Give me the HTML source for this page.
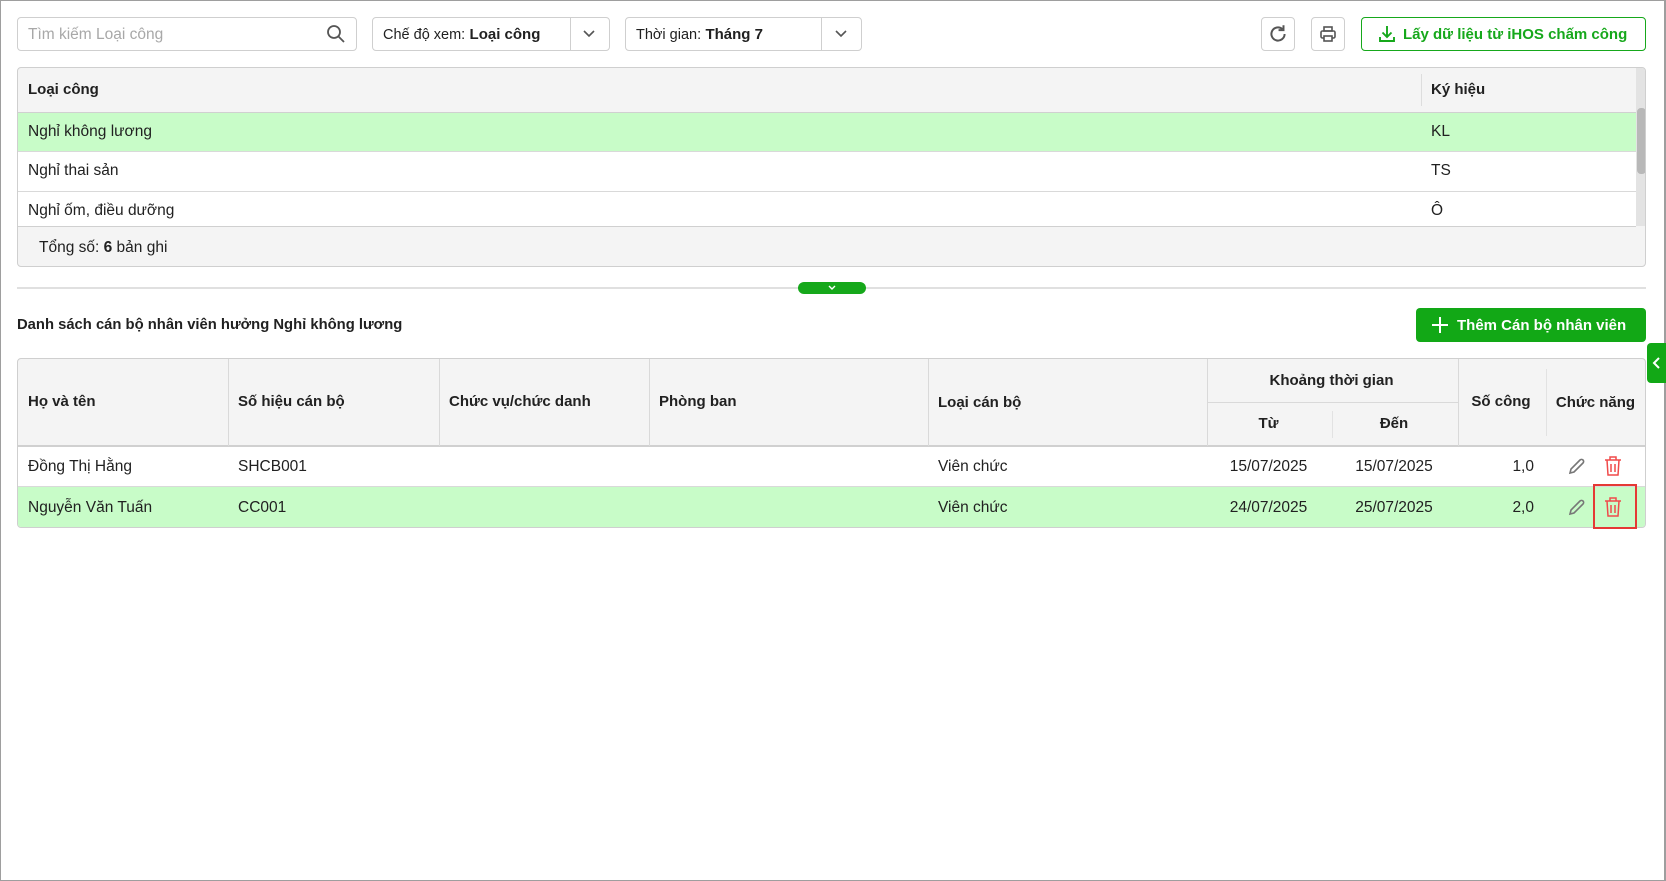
<!DOCTYPE html>
<html><head><meta charset="utf-8"><style>
*{box-sizing:border-box;margin:0;padding:0}
body{width:1666px;height:881px;background:#fff;font-family:"Liberation Sans",sans-serif;font-size:15.5px;color:#212121;position:relative;overflow:hidden}
.frame{position:absolute;left:0;top:0;width:1666px;height:881px;border:1px solid #9e9e9e;border-right:2px solid #9e9e9e}
.a{position:absolute}
.box{position:absolute;border:1px solid #cfcfcf;border-radius:4px;background:#fff}
.t{position:absolute;white-space:nowrap}
.b{font-weight:bold;font-size:15px}
.hl{background:#c8fcc8}
.ln{position:absolute;background:#d9d9d9}
</style></head><body>
<div class="frame"></div>

<div class="box" style="left:17px;top:17px;width:340px;height:34px"></div>
<div class="t" style="left:28px;top:26px;color:#a8a8a8">Tìm kiếm Loại công</div>
<svg class="a" style="left:326px;top:24px" width="20" height="20" viewBox="0 0 20 20"><circle cx="8" cy="8" r="6" fill="none" stroke="#555" stroke-width="1.8"/><path d="M12.5 12.5L18 18" stroke="#555" stroke-width="1.8"/></svg>

<div class="box" style="left:372px;top:17px;width:238px;height:34px"></div>
<div class="ln" style="left:570px;top:18px;width:1px;height:32px;background:#cfcfcf"></div>
<div class="t" style="left:383px;top:26px"><span style="font-size:14.5px">Chế độ xem:</span> <span style="font-weight:bold;font-size:15px">Loại công</span></div>
<svg class="a" style="left:582px;top:29px" width="14" height="10" viewBox="0 0 14 10"><path d="M2 2l5 5 5-5" fill="none" stroke="#555" stroke-width="1.6"/></svg>

<div class="box" style="left:625px;top:17px;width:237px;height:34px"></div>
<div class="ln" style="left:821px;top:18px;width:1px;height:32px;background:#cfcfcf"></div>
<div class="t" style="left:636px;top:26px"><span style="font-size:14.5px">Thời gian:</span> <span style="font-weight:bold;font-size:15px">Tháng 7</span></div>
<svg class="a" style="left:834px;top:29px" width="14" height="10" viewBox="0 0 14 10"><path d="M2 2l5 5 5-5" fill="none" stroke="#555" stroke-width="1.6"/></svg>

<div class="box" style="left:1261px;top:17px;width:34px;height:34px"></div>
<svg class="a" style="left:1267px;top:23px" width="22" height="22" viewBox="0 0 20 20"><path d="M16 10a6 6 0 1 1-2-4.5" fill="none" stroke="#555" stroke-width="1.8"/><path d="M15 2v4.5h-4.5" fill="none" stroke="#555" stroke-width="1.8"/></svg>
<div class="box" style="left:1311px;top:17px;width:34px;height:34px"></div>
<svg class="a" style="left:1318px;top:24px" width="20" height="20" viewBox="0 0 20 20"><rect x="6" y="3" width="8" height="4" fill="none" stroke="#555" stroke-width="1.6"/><rect x="3" y="7" width="14" height="7" rx="1.5" fill="none" stroke="#555" stroke-width="1.6"/><rect x="6" y="12" width="8" height="5" fill="#fff" stroke="#555" stroke-width="1.6"/></svg>

<div class="box" style="left:1361px;top:17px;width:285px;height:34px;border-color:#16a81b"></div>
<svg class="a" style="left:1377px;top:24px" width="20" height="20" viewBox="0 0 20 20"><path d="M10 2v11M5.5 8.5L10 13l4.5-4.5M3 13v4h14v-4" fill="none" stroke="#16a81b" stroke-width="1.9"/></svg>
<div class="t b" style="left:1403px;top:26px;color:#16a81b">Lấy dữ liệu từ iHOS chấm công</div>

<div class="box" style="left:17px;top:67px;width:1629px;height:200px;background:#f4f4f4;overflow:hidden;border-radius:4px">
 <div class="a hl" style="left:0;top:45px;width:1618px;height:39px"></div>
 <div class="a" style="left:0;top:84px;width:1618px;height:75px;background:#fff"></div>
 <div class="ln" style="left:0;top:44px;width:1618px;height:1px;background:#d0d0d0"></div>
 <div class="ln" style="left:0;top:83px;width:1618px;height:1px"></div>
 <div class="ln" style="left:0;top:123px;width:1618px;height:1px"></div>
 <div class="ln" style="left:0;top:158px;width:1618px;height:1px;background:#d0d0d0"></div>
 <div class="ln" style="left:1403px;top:6px;width:1px;height:32px;background:#ddd"></div>
 <div class="a" style="left:1618px;top:0;width:11px;height:158px;background:#e3e3e3"></div>
 <div class="a" style="left:1619px;top:40px;width:9px;height:66px;background:#b8b8b8;border-radius:4px"></div>
</div>
<div class="t b" style="left:28px;top:81px">Loại công</div>
<div class="t b" style="left:1431px;top:81px">Ký hiệu</div>
<div class="t" style="left:28px;top:123px">Nghỉ không lương</div><div class="t" style="left:1431px;top:123px">KL</div>
<div class="t" style="left:28px;top:162px">Nghỉ thai sản</div><div class="t" style="left:1431px;top:162px">TS</div>
<div class="t" style="left:28px;top:202px">Nghỉ ốm, điều dưỡng</div><div class="t" style="left:1431px;top:202px">Ô</div>
<div class="t" style="left:39px;top:239px">Tổng số: <b>6</b> bản ghi</div>

<div class="ln" style="left:17px;top:287px;width:1629px;height:2px;background:#e0e0e0"></div>
<div class="a" style="left:798px;top:282px;width:68px;height:12px;background:#16a81b;border-radius:6px"></div>
<svg class="a" style="left:827px;top:284px" width="10" height="8" viewBox="0 0 10 8"><path d="M2 2l3 3 3-3" fill="none" stroke="#fff" stroke-width="1.4"/></svg>

<div class="t b" style="left:17px;top:317px;font-size:14.8px">Danh sách cán bộ nhân viên hưởng Nghỉ không lương</div>
<div class="a" style="left:1416px;top:308px;width:230px;height:34px;background:#12a816;border-radius:4px"></div>
<svg class="a" style="left:1430px;top:315px" width="20" height="20" viewBox="0 0 20 20"><path d="M10 2v16M2 10h16" stroke="#fff" stroke-width="2"/></svg>
<div class="t b" style="left:1457px;top:317px;color:#fff">Thêm Cán bộ nhân viên</div>
<div class="a" style="left:1647px;top:343px;width:19px;height:40px;background:#12a816;border-radius:4px 0 0 4px"></div>
<svg class="a" style="left:1651px;top:356px" width="12" height="14" viewBox="0 0 12 14"><path d="M8 2L3 7l5 5" fill="none" stroke="#fff" stroke-width="2"/></svg>

<div class="box" style="left:17px;top:358px;width:1629px;height:170px;background:#f4f4f4;overflow:hidden">
 <div class="a" style="left:0;top:87px;width:1629px;height:41px;background:#fff"></div>
 <div class="a hl" style="left:0;top:128px;width:1629px;height:42px"></div>
 <div class="ln" style="left:0;top:86px;width:1629px;height:2px;background:#d0d0d0"></div>
 <div class="ln" style="left:0;top:127px;width:1629px;height:1px"></div>
 <div class="ln" style="left:210px;top:0;width:1px;height:87px"></div>
 <div class="ln" style="left:421px;top:0;width:1px;height:87px"></div>
 <div class="ln" style="left:631px;top:0;width:1px;height:87px"></div>
 <div class="ln" style="left:910px;top:0;width:1px;height:87px"></div>
 <div class="ln" style="left:1189px;top:0;width:1px;height:87px"></div>
 <div class="ln" style="left:1189px;top:43px;width:251px;height:1px"></div>
 <div class="ln" style="left:1314px;top:52px;width:1px;height:27px;background:#e2e2e2"></div>
 <div class="ln" style="left:1440px;top:0;width:1px;height:87px"></div>
 <div class="ln" style="left:1528px;top:10px;width:1px;height:67px;background:#e2e2e2"></div>
</div>
<div class="t b" style="left:28px;top:393px">Họ và tên</div>
<div class="t b" style="left:238px;top:393px">Số hiệu cán bộ</div>
<div class="t b" style="left:449px;top:393px">Chức vụ/chức danh</div>
<div class="t b" style="left:659px;top:393px">Phòng ban</div>
<div class="t b" style="left:938px;top:394px">Loại cán bộ</div>
<div class="t b" style="left:1206px;top:372px;width:251px;text-align:center">Khoảng thời gian</div>
<div class="t b" style="left:1206px;top:415px;width:125px;text-align:center">Từ</div>
<div class="t b" style="left:1331px;top:415px;width:126px;text-align:center">Đến</div>
<div class="t b" style="left:1457px;top:393px;width:88px;text-align:center">Số công</div>
<div class="t b" style="left:1545px;top:394px;width:101px;text-align:center">Chức năng</div>

<div class="t" style="left:28px;top:458px">Đồng Thị Hằng</div>
<div class="t" style="left:238px;top:458px">SHCB001</div>
<div class="t" style="left:938px;top:458px">Viên chức</div>
<div class="t" style="left:1206px;top:458px;width:125px;text-align:center">15/07/2025</div>
<div class="t" style="left:1331px;top:458px;width:126px;text-align:center">15/07/2025</div>
<div class="t" style="left:1457px;top:458px;width:77px;text-align:right">1,0</div>

<div class="t" style="left:28px;top:499px">Nguyễn Văn Tuấn</div>
<div class="t" style="left:238px;top:499px">CC001</div>
<div class="t" style="left:938px;top:499px">Viên chức</div>
<div class="t" style="left:1206px;top:499px;width:125px;text-align:center">24/07/2025</div>
<div class="t" style="left:1331px;top:499px;width:126px;text-align:center">25/07/2025</div>
<div class="t" style="left:1457px;top:499px;width:77px;text-align:right">2,0</div>

<svg class="a" style="left:1567px;top:456px" width="20" height="20" viewBox="0 0 20 20"><path d="M3 17l1-4L13 4a2 2 0 0 1 3 3l-9 9z" fill="none" stroke="#777" stroke-width="1.6"/></svg>
<svg class="a" style="left:1603px;top:455px" width="20" height="22" viewBox="0 0 20 22"><path d="M2 5h16M7 5V2h6v3M4 5l1 15h10l1-15M8 9v8M12 9v8" fill="none" stroke="#f04a4a" stroke-width="1.5"/></svg>
<svg class="a" style="left:1567px;top:497px" width="20" height="20" viewBox="0 0 20 20"><path d="M3 17l1-4L13 4a2 2 0 0 1 3 3l-9 9z" fill="none" stroke="#777" stroke-width="1.6"/></svg>
<svg class="a" style="left:1603px;top:496px" width="20" height="22" viewBox="0 0 20 22"><path d="M2 5h16M7 5V2h6v3M4 5l1 15h10l1-15M8 9v8M12 9v8" fill="none" stroke="#f04a4a" stroke-width="1.5"/></svg>
<div class="a" style="left:1593px;top:484px;width:44px;height:45px;border:2px solid #e53935"></div>
</body></html>
